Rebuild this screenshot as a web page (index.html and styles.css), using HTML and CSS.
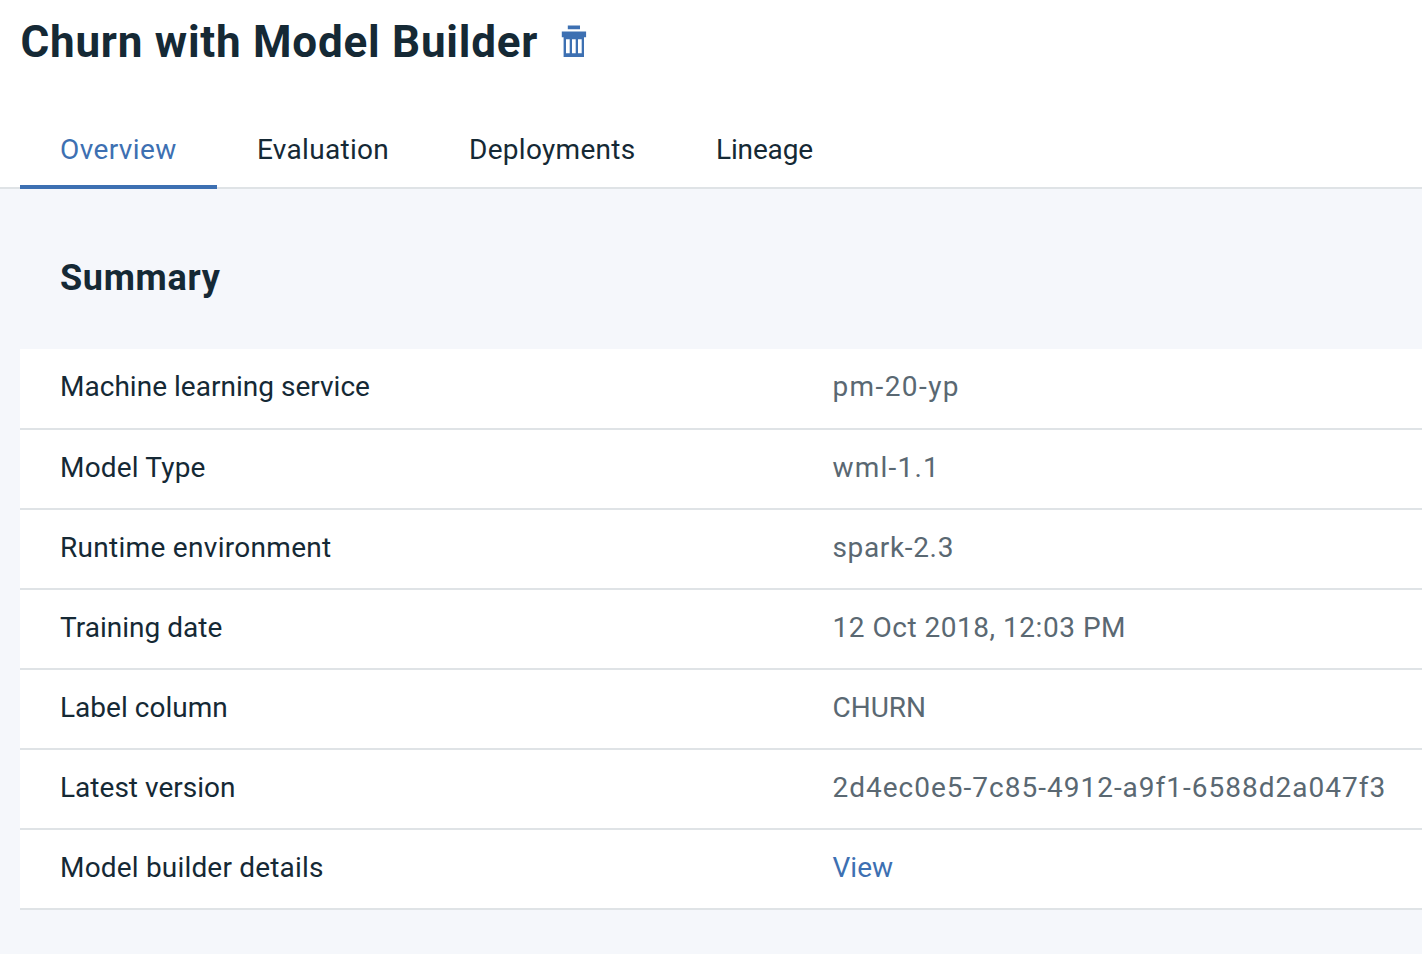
FILE: index.html
```html
<!DOCTYPE html>
<html lang="en">
<head>
<meta charset="utf-8">
<title>Churn with Model Builder</title>
<link rel="stylesheet" href="styles.css">
</head>
<body>
<header class="header">
  <h1 class="title">Churn with Model Builder</h1>
  <button class="delete" aria-label="Delete model">
    <svg width="26" height="34" viewBox="0 0 26 34" fill="currentColor">
      <path d="M6.8.5h12.2v3.8H6.8zM.8 6.4h24.3v5.8H.8z"/>
      <path fill-rule="evenodd" d="M2.6 12h20.4v20H2.6zM5 14.3v14h3.7v-14zM11 14.3v14h3.7v-14zM17 14.3v14h3.7v-14z"/>
    </svg>
  </button>
</header>
<nav class="tabs">
  <a class="tab tab-overview active">Overview</a>
  <a class="tab tab-evaluation">Evaluation</a>
  <a class="tab tab-deployments">Deployments</a>
  <a class="tab tab-lineage">Lineage</a>
</nav>
<main class="content">
  <h2 class="heading">Summary</h2>
  <dl class="summary">
    <div class="row first"><dt class="label">Machine learning service</dt><dd class="value service">pm-20-yp</dd></div>
    <div class="row"><dt class="label loose">Model Type</dt><dd class="value type">wml-1.1</dd></div>
    <div class="row"><dt class="label looser">Runtime environment</dt><dd class="value runtime">spark-2.3</dd></div>
    <div class="row"><dt class="label">Training date</dt><dd class="value date">12 Oct 2018, 12:03 PM</dd></div>
    <div class="row"><dt class="label">Label column</dt><dd class="value column">CHURN</dd></div>
    <div class="row"><dt class="label">Latest version</dt><dd class="value version">2d4ec0e5-7c85-4912-a9f1-6588d2a047f3</dd></div>
    <div class="row"><dt class="label loose">Model builder details</dt><dd class="value"><a class="link">View</a></dd></div>
  </dl>
</main>
</body>
</html>
```
FILE: styles.css
```css
* { box-sizing: border-box; }
body {
  margin: 0;
  min-height: 954px;
  background: #f5f7fb;
  color: #152935;
  font: 28px/75px Roboto, "Liberation Sans", sans-serif;
  overflow: hidden;
}
.header {
  display: flex;
  height: 112px;
  padding-left: 20.5px;
  background: #fff;
}
.title {
  width: 540.5px;
  margin: 0;
  font-size: 44px;
  line-height: 84px;
  font-weight: 700;
  letter-spacing: .76px;
  white-space: nowrap;
}
.delete {
  width: 26px;
  height: 34px;
  margin: 25px 0 0;
  padding: 0;
  border: 0;
  background: none;
  color: #3d70b2;
}
.delete svg { display: block; }
.tabs {
  display: flex;
  height: 77px;
  padding-left: 20px;
  background: #fff;
  border-bottom: 2px solid #dfe3e6;
}
.tab {
  height: 77px;
  padding-left: 40px;
  white-space: nowrap;
}
.tab-overview { width: 197px; letter-spacing: .4px; }
.tab-evaluation { width: 212px; letter-spacing: .3px; }
.tab-deployments { width: 247px; letter-spacing: .3px; }
.tab-lineage { width: 177px; letter-spacing: -.15px; }
.active {
  color: #3d70b2;
  box-shadow: inset 0 -4px #3d70b2;
}
.content { padding-left: 20px; }
.heading {
  height: 160px;
  margin: 0;
  padding: 69px 0 0 40px;
  font-size: 36px;
  line-height: 40px;
  font-weight: 700;
  letter-spacing: .7px;
}
.summary { margin: 0; }
.row {
  display: grid;
  grid-template-columns: 772.5px 1fr;
  height: 80px;
  padding-left: 40px;
  background: #fff;
  border-bottom: 2px solid #dfe3e6;
}
.first { height: 81px; }
.label { letter-spacing: .02px; }
.loose { letter-spacing: .18px; }
.looser { letter-spacing: .3px; }
.value {
  margin: 0;
  color: #5a6872;
  white-space: nowrap;
}
.service { letter-spacing: 1.4px; }
.type { letter-spacing: 1.2px; }
.runtime { letter-spacing: .65px; }
.date { letter-spacing: .52px; }
.column { letter-spacing: 0; }
.version { letter-spacing: 1px; }
.link { color: #3d70b2; }
```
